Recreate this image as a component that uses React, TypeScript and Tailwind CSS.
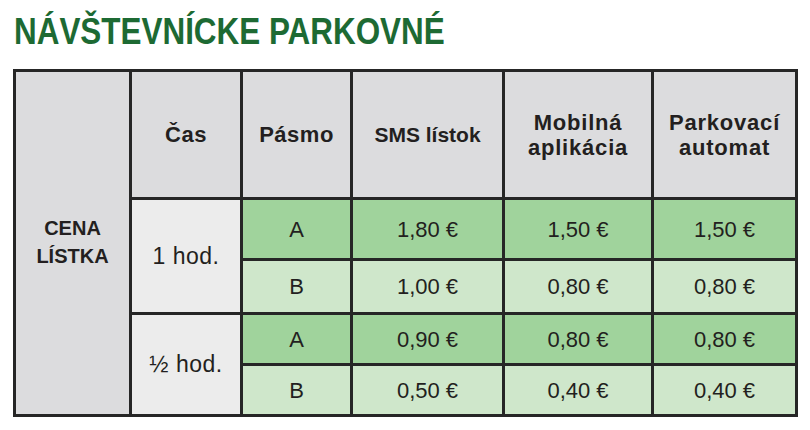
import React from "react";

const font = { fontFamily: '"Liberation Sans", Arial, sans-serif' };

export default function App() {
  const prices: [string, string, string, string][] = [
    ["A", "1,80 €", "1,50 €", "1,50 €"],
    ["B", "1,00 €", "0,80 €", "0,80 €"],
    ["A", "0,90 €", "0,80 €", "0,80 €"],
    ["B", "0,50 €", "0,40 €", "0,40 €"],
  ];
  return (
    <div className="w-[810px] h-[430px] bg-white overflow-hidden" style={font}>
      <div className="pl-[14px] pt-[14px] h-[36px] box-content">
        <h1 className="text-[36px] leading-[36px] font-bold text-[#1d6a33] whitespace-nowrap origin-left scale-x-[0.873]">
          NÁVŠTEVNÍCKE PARKOVNÉ
        </h1>
      </div>
      <div className="ml-[13px] mt-[19px] w-[785px] grid grid-cols-[113px_108px_107px_149px_146px_141px] grid-rows-[125px_58px_51px_48px_48px] gap-[3px] p-[3px] bg-[#262626] text-[#231f20]">
        <div className="row-span-5 bg-[#dcdcde] flex items-center justify-center text-center font-bold text-[20px] leading-[28px] pb-[2px]">
          CENA
          <br />
          LÍSTKA
        </div>
        <div className="bg-[#dcdcde] flex items-center justify-center font-bold text-[22px] tracking-[0.5px]">Čas</div>
        <div className="bg-[#dcdcde] flex items-center justify-center font-bold text-[22px] tracking-[0.5px]">Pásmo</div>
        <div className="bg-[#dcdcde] flex items-center justify-center font-bold text-[21px]">SMS lístok</div>
        <div className="bg-[#dcdcde] flex items-center justify-center text-center font-bold text-[22px] leading-[25px] tracking-[0.8px]">
          Mobilná
          <br />
          aplikácia
        </div>
        <div className="bg-[#dcdcde] flex items-center justify-center text-center font-bold text-[22px] leading-[25px] tracking-[0.8px]">
          Parkovací
          <br />
          automat
        </div>
        {prices.map((row, i) => (
          <React.Fragment key={i}>
            {i % 2 === 0 && (
              <div className="row-span-2 bg-[#ececec] flex items-center justify-center text-[23px] tracking-[0.5px]">
                {i === 0 ? "1 hod." : "½ hod."}
              </div>
            )}
            {row.map((c, j) => (
              <div
                key={j}
                className={`${i % 2 === 0 ? "bg-[#a0d39c]" : "bg-[#cfe7cb]"} flex items-center justify-center text-[22px]`}
              >
                {c}
              </div>
            ))}
          </React.Fragment>
        ))}
      </div>
    </div>
  );
}
